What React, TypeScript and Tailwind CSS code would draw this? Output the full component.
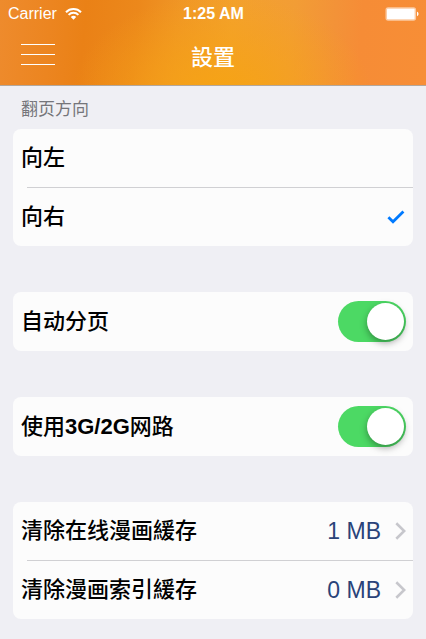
import { useState } from 'react';

type Direction = 'left' | 'right';

const DIRECTIONS: { value: Direction; label: string }[] = [
  { value: 'left', label: '向左' },
  { value: 'right', label: '向右' },
];

const CACHES = [
  { id: 'online', label: '清除在线漫画緩存', size: '1 MB' },
  { id: 'index', label: '清除漫画索引緩存', size: '0 MB' },
];

function WifiIcon() {
  return (
    <svg width="17" height="12" viewBox="0 0 17 12" fill="none" stroke="white" strokeWidth="2" aria-hidden="true">
      <path d="M1 4.2a10.6 10.6 0 0 1 15 0" />
      <path d="M3.6 6.9a6.9 6.9 0 0 1 9.8 0" />
      <path d="M8.5 11.8 5.8 9.1a3.8 3.8 0 0 1 5.4 0z" fill="white" stroke="none" />
    </svg>
  );
}

function BatteryIcon() {
  return (
    <svg width="34" height="14" viewBox="0 0 34 14" aria-hidden="true">
      <rect x="0.5" y="0.3" width="30.6" height="13.4" rx="2.6" fill="white" fillOpacity="0.55" />
      <rect x="2" y="1.8" width="27.6" height="10.4" rx="0.8" fill="white" />
      <path d="M32 4.8c2 .6 2 3.8 0 4.4z" fill="white" />
    </svg>
  );
}

function Check() {
  return (
    <svg width="18" height="14" viewBox="0 0 18 14" fill="none" stroke="#007aff" strokeWidth="2.8" aria-hidden="true">
      <path d="M1.4 7.2 6 11.7 16.4 1.4" />
    </svg>
  );
}

function Chevron() {
  return (
    <svg width="11" height="18" viewBox="0 0 11 18" fill="none" stroke="#c7c7cc" strokeWidth="2.6" aria-hidden="true">
      <path d="m1.3 1.3 7.9 7.7-7.9 7.7" />
    </svg>
  );
}

function Separator() {
  return <div className="ml-3.5 h-px bg-[#d0d0d3]" />;
}

type SwitchRowProps = {
  label: string;
  checked: boolean;
  onChange: (checked: boolean) => void;
};

function SwitchRow({ label, checked, onChange }: SwitchRowProps) {
  return (
    <label className="flex h-[59px] items-center justify-between rounded-lg bg-[#fcfcfc] pr-[7px] pl-2">
      {/* Latin runs are set bold to balance the medium CJK glyphs. */}
      <span>
        {label.split(/([\x20-\x7e]+)/).map((part, i) =>
          i % 2 === 1 ? <b key={i} className="font-bold">{part}</b> : part,
        )}
      </span>
      <input
        type="checkbox"
        role="switch"
        checked={checked}
        onChange={(e) => onChange(e.target.checked)}
        className="flex h-[41px] w-[68px] appearance-none items-center rounded-full bg-[#e5e5ea] px-0.5 before:size-[37px] before:rounded-full before:bg-white before:shadow-[0_3px_7px_rgba(0,0,0,0.35)] checked:justify-end checked:bg-[#4cd964]"
      />
    </label>
  );
}

export default function App() {
  const [direction, setDirection] = useState<Direction>('right');
  const [autoSplit, setAutoSplit] = useState(true);
  const [useCellular, setUseCellular] = useState(true);

  return (
    <div className="min-h-screen bg-[#efeff4] font-['Liberation_Sans','Noto_Sans_CJK_SC',sans-serif] text-black">
      <header className="border-b border-[#b3a79c] bg-[radial-gradient(ellipse_150px_100px_at_52%_110%,#f6a314_0%,#f6a31480_50%,transparent_100%),linear-gradient(95deg,#ee8b2d_0%,#ec8520_12%,#ea8116_20%,#ec881b_32%,#f09626_42%,#f3a12e_54%,#f29d35_68%,#f39238_78%,#f68c36_84%,#f78e36_100%)] text-white">
        <div className="grid h-7 grid-cols-3 items-center pr-[7px] pl-2 text-base">
          <div className="flex items-center gap-2">
            <span>Carrier</span>
            <WifiIcon />
          </div>
          <span className="text-center font-bold">1:25 AM</span>
          <div className="flex justify-end">
            <BatteryIcon />
          </div>
        </div>
        <div className="grid h-[57px] grid-cols-[1fr_auto_1fr] items-center px-[21px] pb-1">
          <button type="button" aria-label="菜单" className="flex w-[34px] flex-col gap-[9px]">
            <span className="h-px w-full bg-white" />
            <span className="h-px w-full bg-white" />
            <span className="h-px w-full bg-white" />
          </button>
          <h1 className="font-['Noto_Sans_CJK_TC',sans-serif] text-[22px] leading-7 font-medium">設置</h1>
        </div>
      </header>

      <main className="flex flex-col gap-[46px] px-[13px] pb-5 text-[22px] leading-7 font-medium">
        <fieldset>
          <legend className="flex h-[43px] items-center px-2 pt-1 text-[17px] font-normal text-[#75757a]">翻页方向</legend>
          <div className="rounded-lg bg-[#fcfcfc]">
            {DIRECTIONS.map((d, i) => (
              <div key={d.value}>
                {i > 0 && <Separator />}
                <label className="flex h-[58px] items-center justify-between px-2">
                  <span>{d.label}</span>
                  <input
                    type="radio"
                    name="direction"
                    className="sr-only"
                    checked={direction === d.value}
                    onChange={() => setDirection(d.value)}
                  />
                  {direction === d.value && <Check />}
                </label>
              </div>
            ))}
          </div>
        </fieldset>

        <SwitchRow label="自动分页" checked={autoSplit} onChange={setAutoSplit} />
        <SwitchRow label="使用3G/2G网路" checked={useCellular} onChange={setUseCellular} />

        <div className="rounded-lg bg-[#fcfcfc]">
          {CACHES.map((c, i) => (
            <div key={c.id}>
              {i > 0 && <Separator />}
              <button type="button" className="flex h-[58px] w-full items-center pr-[7px] pl-2 text-left">
                <span className="flex-1">{c.label}</span>
                <span className="mr-3.5 text-[23px] font-normal text-[#2a4379]">{c.size}</span>
                <Chevron />
              </button>
            </div>
          ))}
        </div>
      </main>
    </div>
  );
}
